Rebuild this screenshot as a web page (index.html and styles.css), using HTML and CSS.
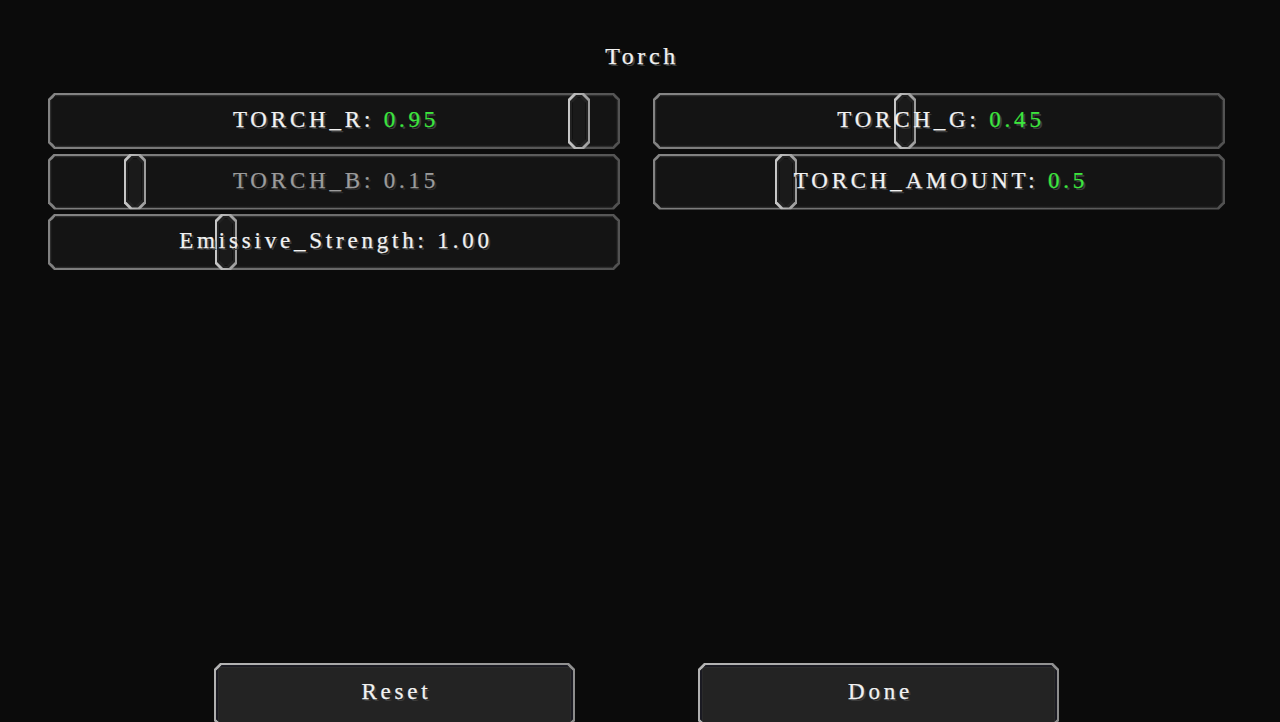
FILE: index.html
```html
<!DOCTYPE html>
<html>
<head>
<meta charset="utf-8">
<title>Torch</title>
<link rel="stylesheet" href="styles.css">
</head>
<body>
<div class="screen">
  <h1 class="title">Torch</h1>
  <div class="grid">
    <div class="slider">
      <div class="face"></div>
      <div class="handle" style="left:520px"><div class="handle-in"><div class="handle-core"></div></div></div>
      <div class="caption"><span class="label">TORCH_R: <span class="val">0.95</span></span></div>
    </div>
    <div class="slider">
      <div class="face"></div>
      <div class="handle" style="left:241px"><div class="handle-in"><div class="handle-core"></div></div></div>
      <div class="caption"><span class="label">TORCH_G: <span class="val">0.45</span></span></div>
    </div>
    <div class="slider disabled">
      <div class="face"></div>
      <div class="handle" style="left:76px"><div class="handle-in"><div class="handle-core"></div></div></div>
      <div class="caption"><span class="label">TORCH_B: <span class="val">0.15</span></span></div>
    </div>
    <div class="slider">
      <div class="face"></div>
      <div class="handle" style="left:122px"><div class="handle-in"><div class="handle-core"></div></div></div>
      <div class="caption"><span class="label">TORCH_AMOUNT: <span class="val">0.5</span></span></div>
    </div>
    <div class="slider">
      <div class="face"></div>
      <div class="handle" style="left:167px"><div class="handle-in"><div class="handle-core"></div></div></div>
      <div class="caption"><span class="label">Emissive_Strength: 1.00</span></div>
    </div>
  </div>
  <div class="buttons">
    <div class="button"><div class="button-face"><span class="label">Reset</span></div></div>
    <div class="button"><div class="button-face"><span class="label">Done</span></div></div>
  </div>
</div>
</body>
</html>
```

FILE: styles.css
```css
html, body {
  margin: 0;
  padding: 0;
  background: #0b0b0b;
  overflow: hidden;
}
.screen {
  width: 1280px;
  height: 722px;
  display: flex;
  flex-direction: column;
  font-family: "Liberation Serif", "DejaVu Serif", serif;
  color: #f2f2f2;
}
.title {
  margin: 0;
  height: 93px;
  padding-top: 41px;
  padding-left: 4px;
  box-sizing: border-box;
  text-align: center;
  font-weight: normal;
  font-size: 24px;
  line-height: 30px;
  letter-spacing: 3.6px;
  text-shadow: 2px 2px 0 #3c3c3c;
  -webkit-text-stroke: 0.25px #f2f2f2;
}
.grid {
  display: grid;
  grid-template-columns: 572px 572px;
  grid-auto-rows: 56px;
  column-gap: 33px;
  row-gap: 4.5px;
  padding-left: 48px;
}
.slider, .face, .handle, .handle-in, .handle-core, .button, .button-face {
  clip-path: polygon(6px 0, calc(100% - 6px) 0, 100% 6px, 100% calc(100% - 6px), calc(100% - 6px) 100%, 6px 100%, 0 calc(100% - 6px), 0 6px);
}
.slider {
  position: relative;
  background: linear-gradient(135deg, #858585, #505050);
  padding: 2px;
  box-sizing: border-box;
  display: flex;
}
.face {
  flex: 1;
  background: #141414;
  box-shadow: inset 0 0 0 1px #2e2e2e, inset 0 0 0 2px #1a1a1a;
}
.caption {
  position: absolute;
  inset: 0;
  display: flex;
  align-items: center;
  justify-content: center;
  z-index: 2;
}
.label {
  font-size: 23px;
  letter-spacing: 3.8px;
  text-shadow: 2px 2px 0 #3c3c3c;
  -webkit-text-stroke: 0.25px currentColor;
  white-space: nowrap;
  padding-left: 4px;
  padding-bottom: 2px;
}
.val { color: #3ee63e; }
.disabled .label, .disabled .val { color: #9c9c9c; text-shadow: 2px 2px 0 #2a2a2a; }
.handle {
  position: absolute;
  top: 0;
  width: 22px;
  height: 56px;
  background: linear-gradient(90deg, #c8c8c8, #9a9a9a);
  padding: 2px;
  box-sizing: border-box;
  display: flex;
  z-index: 1;
}
.handle-in {
  flex: 1;
  background: #222;
  padding: 2px;
  display: flex;
}
.handle-core {
  flex: 1;
  background: #1a1a1a;
  box-shadow: inset 0 0 0 1px #111;
}
.buttons {
  margin-top: auto;
  height: 59px;
  display: flex;
  gap: 123px;
  padding-left: 214px;
}
.button {
  width: 361px;
  height: 64px;
  background: linear-gradient(135deg, #b4b4b4, #8a8a8a);
  padding: 2px;
  box-sizing: border-box;
  display: flex;
}
.button-face {
  flex: 1;
  background: #232323;
  box-shadow: inset 0 0 0 2px #1a1a22, inset 0 0 0 3px #2a2a2a;
  display: flex;
  justify-content: center;
  padding-top: 13px;
  box-sizing: border-box;
}
.button .label {
  line-height: 28px;
}
```
